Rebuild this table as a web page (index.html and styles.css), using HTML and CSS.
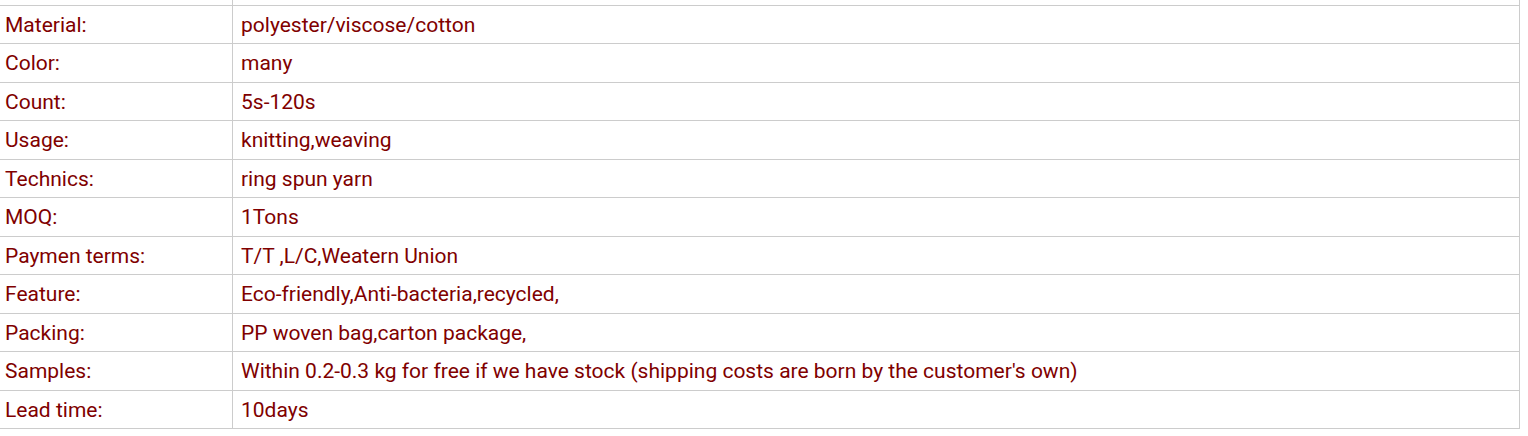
FILE: index.html
```html
<!DOCTYPE html>
<html>
<head>
<meta charset="utf-8">
<link rel="stylesheet" href="styles.css">
</head>
<body>
<div class="specs">
  <div class="row row-cut"><div class="key"></div><div class="val"></div></div>
  <div class="row"><div class="key">Material:</div><div class="val">polyester/viscose/cotton</div></div>
  <div class="row"><div class="key">Color:</div><div class="val">many</div></div>
  <div class="row"><div class="key">Count:</div><div class="val">5s-120s</div></div>
  <div class="row"><div class="key">Usage:</div><div class="val">knitting,weaving</div></div>
  <div class="row"><div class="key">Technics:</div><div class="val">ring spun yarn</div></div>
  <div class="row"><div class="key">MOQ:</div><div class="val">1Tons</div></div>
  <div class="row"><div class="key">Paymen terms:</div><div class="val">T/T ,L/C,Weatern Union</div></div>
  <div class="row"><div class="key">Feature:</div><div class="val">Eco-friendly,Anti-bacteria,recycled,</div></div>
  <div class="row"><div class="key">Packing:</div><div class="val">PP woven bag,carton package,</div></div>
  <div class="row"><div class="key">Samples:</div><div class="val">Within 0.2-0.3 kg for free if we have stock (shipping costs are born by the customer's own)</div></div>
  <div class="row"><div class="key">Lead time:</div><div class="val">10days</div></div>
</div>
</body>
</html>
```
FILE: styles.css
```css
html, body {
  margin: 0;
  padding: 0;
  background: #fff;
}
.specs {
  width: 1520px;
  border-right: 1px solid #cccccc;
  box-sizing: border-box;
  font-family: Roboto, "Liberation Sans", sans-serif;
  font-size: 21px;
  color: #800000;
}
.row {
  display: grid;
  grid-template-columns: 233px 1fr;
  height: 38.5px;
  box-sizing: border-box;
  border-bottom: 1px solid #cccccc;
  align-items: center;
}
.row-cut {
  height: 5.9px;
}
.key, .val {
  height: 100%;
  display: flex;
  align-items: center;
  white-space: nowrap;
}
.key {
  padding-left: 5px;
  border-right: 1px solid #cccccc;
  box-sizing: border-box;
}
.val {
  padding-left: 8px;
}
```
